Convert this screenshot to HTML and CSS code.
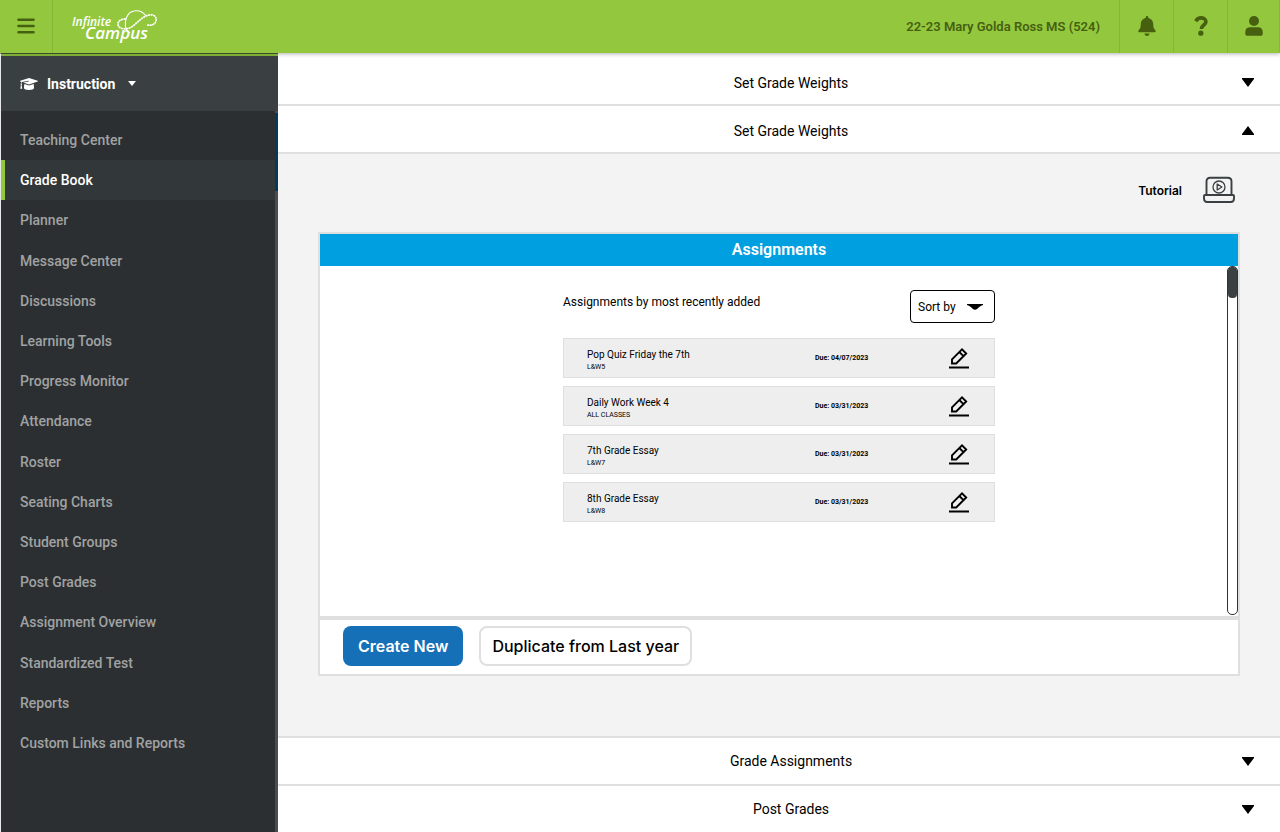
FILE: index.html
```html
<!DOCTYPE html>
<html lang="en">
<head>
    <meta charset="UTF-8">
    <meta name="viewport" content="width=device-width, initial-scale=1.0">
    <title>Infinite Campus - Grade Book</title>
    <link rel="stylesheet" href="styles.css">
</head>
<body>

<header class="topbar">
    <button class="topbar-button menu-button" aria-label="Menu">
        <svg width="18" height="16" viewBox="0 0 18 16" fill="none" stroke="currentColor" stroke-width="2.6" stroke-linecap="round"><path d="M1.5 1.8h15M1.5 8h15M1.5 14.2h15"/></svg>
    </button>
    <a href="#" class="logo" aria-label="Infinite Campus">
        <svg width="90" height="40" viewBox="0 0 90 40">
            <text class="logo-small" x="2" y="19">Infinite</text>
            <text class="logo-big" x="15" y="32">Campus</text>
            <g fill="none" stroke="#fff">
                <path d="M56 22C54 14 57 5 64 4c5-1 9 1 12 5" stroke-width="1.1"/>
                <path d="M56 22c1 2 2 3 4 4" stroke-width="1.1"/>
                <path d="M55 12c-4 0-7 2-7 5 0 5 8 7 15 2 5-4 10-10 16-11 5-1 8 2 7 6-1 3-4 5-9 4" stroke-width="1.8" stroke-linecap="round" stroke-dasharray="0.6 2"/>
            </g>
        </svg>
    </a>
    <span class="school">22-23 Mary Golda Ross MS (524)</span>
    <button class="topbar-button" aria-label="Notifications">
        <svg width="18" height="20" viewBox="0 0 448 512" fill="currentColor"><path d="M224 512c35.300 0 63.900-28.600 63.900-64H160.100c0 35.400 28.600 64 63.900 64zm215.400-149.700c-19.300-20.800-55.500-52-55.500-154.300 0-77.700-54.500-139.900-127.900-155.200V32c0-17.700-14.300-32-32-32s-32 14.300-32 32v20.800C118.600 68.100 64.100 130.300 64.100 208c0 102.300-36.200 133.500-55.500 154.300-6 6.400-8.700 14.200-8.600 21.700.1 16.400 13 32 32.100 32h383.800c19.100 0 32-15.600 32.100-32 .1-7.500-2.600-15.300-8.600-21.700z"/></svg>
    </button>
    <button class="topbar-button" aria-label="Help">
        <svg width="14" height="20" viewBox="0 0 14 20" fill="none" stroke="currentColor"><path d="M1.800 5.200C3.200 2.800 4.800 1.900 7 1.900c2.700 0 4.900 1.500 4.900 3.800 0 3.400-4.500 3.300-4.500 7.300" stroke-width="3.700"/><circle cx="6.800" cy="17.200" r="2.600" fill="currentColor" stroke="none"/></svg>
    </button>
    <button class="topbar-button account-button" aria-label="Account">
        <svg width="18" height="20" viewBox="0 0 18 20" fill="currentColor"><circle cx="9" cy="5" r="5"/><path d="M5 11.300h8c3 0 4.700 2 4.700 4.800v1.900c0 1-.8 1.800-1.800 1.800H2.100c-1 0-1.800-.8-1.800-1.800v-1.900c0-2.800 1.700-4.800 4.700-4.800z"/></svg>
    </button>
</header>

<div class="layout">
    <nav class="sidebar">
        <button class="sidebar-title">
            <svg width="18" height="12" viewBox="0 0 18 12" fill="#fff"><path d="M9 0l8.700 2.800c.4.200.4.700 0 .8L9 6.400 3.200 4.500 8.900 3.500 8.700 2.800 2 4c-.4.600-.5 1.100-.5 1.700.6.400.5 1 .1 1.300l.7 3.700H.3L.9 7c-.5-.4-.5-1 0-1.400 0-.6.2-1.200.4-1.700l-1-.3c-.4-.1-.4-.6 0-.8z"/><path d="M4.300 6L9 7.500 13.700 6l.4 4c0 1.100-2.300 2-5.100 2s-5.100-.9-5.100-2z"/></svg>
            <span>Instruction</span>
            <svg width="8" height="5" viewBox="0 0 8 5" fill="#fff"><path d="M0 0h8L4 5z"/></svg>
        </button>
        <ul class="nav-list">
            <li><a href="#">Teaching Center</a></li>
            <li><a href="#" class="active">Grade Book</a></li>
            <li><a href="#">Planner</a></li>
            <li><a href="#">Message Center</a></li>
            <li><a href="#">Discussions</a></li>
            <li><a href="#">Learning Tools</a></li>
            <li><a href="#">Progress Monitor</a></li>
            <li><a href="#">Attendance</a></li>
            <li><a href="#">Roster</a></li>
            <li><a href="#">Seating Charts</a></li>
            <li><a href="#">Student Groups</a></li>
            <li><a href="#">Post Grades</a></li>
            <li><a href="#">Assignment Overview</a></li>
            <li><a href="#">Standardized Test</a></li>
            <li><a href="#">Reports</a></li>
            <li><a href="#">Custom Links and Reports</a></li>
        </ul>
    </nav>

    <main class="content">
        <button class="accordion accordion-top">
            <span>Set Grade Weights</span>
            <svg width="12" height="9" viewBox="0 0 12 9"><path d="M0 0h12v1L6 9 0 1z"/></svg>
        </button>
        <button class="accordion accordion-top">
            <span>Set Grade Weights</span>
            <svg width="12" height="9" viewBox="0 0 12 9"><path d="M0 9h12V8L6 0 0 8z"/></svg>
        </button>

        <section class="panel">
            <a href="#" class="tutorial">
                <span>Tutorial</span>
                <svg width="32" height="28" viewBox="0 0 32 28" fill="none" stroke="#3a3f41" stroke-width="1.900">
                    <path d="M3.500 19V5.500c0-2.400 1.300-3.700 3.700-3.700h17.600c2.400 0 3.700 1.300 3.700 3.700V19"/>
                    <path d="M2 19h28c.700 0 1 .400 1 1v2.500c0 2-1.300 3.500-3.300 3.500H4.300C2.300 26 1 24.500 1 22.500V20c0-.600.300-1 1-1z"/>
                    <circle cx="16" cy="11" r="6" stroke-width="1.300"/>
                    <path d="M14.200 8v6l4.700-3z" stroke-width="1.300" stroke-linejoin="round"/>
                </svg>
            </a>

            <div class="card">
                <h2>Assignments</h2>
                <div class="card-body">
                    <div class="assignments">
                        <div class="list-head">
                            <span>Assignments by most recently added</span>
                            <div class="sort">
                                <select aria-label="Sort by">
                                    <option>Sort by</option>
                                </select>
                                <svg width="16" height="6" viewBox="0 0 16 6"><path d="M0 0h16v1c-3 1-4 2-6 4-1 1-3 1-4 0C4 3 3 2 0 1z"/></svg>
                            </div>
                        </div>
                        <ul class="assignment-list">
                            <li>
                                <div class="details"><p class="name">Pop Quiz Friday the 7th</p><p class="class-name">L&amp;W5</p></div>
                                <span class="due">Due: 04/07/2023</span>
                                <button class="edit" aria-label="Edit"><svg width="20" height="22" viewBox="0 0 20 22"><use href="#pencil"/></svg></button>
                            </li>
                            <li>
                                <div class="details"><p class="name">Daily Work Week 4</p><p class="class-name">ALL CLASSES</p></div>
                                <span class="due">Due: 03/31/2023</span>
                                <button class="edit" aria-label="Edit"><svg width="20" height="22" viewBox="0 0 20 22"><use href="#pencil"/></svg></button>
                            </li>
                            <li>
                                <div class="details"><p class="name">7th Grade Essay</p><p class="class-name">L&amp;W7</p></div>
                                <span class="due">Due: 03/31/2023</span>
                                <button class="edit" aria-label="Edit"><svg width="20" height="22" viewBox="0 0 20 22"><use href="#pencil"/></svg></button>
                            </li>
                            <li>
                                <div class="details"><p class="name">8th Grade Essay</p><p class="class-name">L&amp;W8</p></div>
                                <span class="due">Due: 03/31/2023</span>
                                <button class="edit" aria-label="Edit"><svg width="20" height="22" viewBox="0 0 20 22"><use href="#pencil"/></svg></button>
                            </li>
                        </ul>
                    </div>
                    <div class="scrollbar"><div class="scrollbar-thumb"></div></div>
                </div>
                <div class="card-footer">
                    <button class="btn btn-primary">Create New</button>
                    <button class="btn btn-outline">Duplicate from Last year</button>
                </div>
            </div>
        </section>

        <button class="accordion">
            <span>Grade Assignments</span>
            <svg width="12" height="9" viewBox="0 0 12 9"><path d="M0 0h12v1L6 9 0 1z"/></svg>
        </button>
        <button class="accordion">
            <span>Post Grades</span>
            <svg width="12" height="9" viewBox="0 0 12 9"><path d="M0 0h12v1L6 9 0 1z"/></svg>
        </button>
    </main>
</div>

<!-- shared icon -->
<svg class="icon-defs" width="0" height="0">
    <defs>
        <g id="pencil" fill="none" stroke="#000" stroke-width="1.900">
            <path d="M3 16.500v-4.200L13 2.300l4.200 4.200L7.200 16.500zM10.300 5l4.200 4.200"/>
            <path d="M0 20.500h20" stroke-width="2"/>
        </g>
    </defs>
</svg>

</body>
</html>
```
FILE: styles.css
```css
* {
    box-sizing: border-box;
}
body {
    font-family: Roboto, Arial, sans-serif;
    font-size: 14px;
    margin: 0;
    background-color: white;
    color: black;
}
button, select {
    font-family: inherit;
}
button {
    border: none;
    background: none;
    padding: 0;
    cursor: pointer;
}
a {
    text-decoration: none;
}
ul {
    list-style: none;
    margin: 0;
    padding: 0;
}

/* Top bar */
.topbar {
    display: flex;
    align-items: center;
    height: 53px;
    background-color: #93c83e;
    color: #466010;
    position: relative;
    box-shadow: 0 1px 4px rgba(0, 0, 0, 0.3);
}
.topbar-button {
    display: flex;
    align-items: center;
    justify-content: center;
    width: 54px;
    height: 53px;
    padding-bottom: 2px;
    color: #466010;
    border-left: 1px solid #84b637;
}
.menu-button {
    width: 53px;
    border-left: none;
    border-right: 1px solid #84b637;
}
.account-button {
    width: 53px;
    border-right: 1px solid #84b637;
}
.logo {
    display: flex;
    margin-left: 17px;
}
.logo text {
    font-family: "Open Sans", sans-serif;
    font-style: italic;
    font-weight: 600;
    fill: white;
}
.logo .logo-small {
    font-size: 12px;
}
.logo .logo-big {
    font-size: 17px;
}
.school {
    margin-left: auto;
    margin-right: 19px;
    font-size: 13px;
    font-weight: 600;
}

.layout {
    display: flex;
    min-height: calc(100vh - 53px);
}

/* Sidebar */
.sidebar {
    position: relative;
    flex: 0 0 278px;
    min-width: 0;
    border-top: 1px solid #3c4a30;
    border-left: 1px solid #e8e8e8;
    border-right: 3px solid #4b4c4d;
    background-color: #2b2f31;
}
.sidebar::after {
    content: "";
    position: absolute;
    top: 59px;
    right: -3px;
    width: 3px;
    height: 78px;
    background-color: #003b57;
}
.sidebar-title {
    display: flex;
    align-items: center;
    width: 277px;
    height: 57px;
    padding: 0 0 0 19px;
    gap: 9px;
    border-top: 2px solid #7fae35;
    background-color: #3a3f41;
    color: white;
    font-size: 14px;
    font-weight: 700;
}
.sidebar-title span {
    margin-right: 4px;
}
.nav-list {
    display: grid;
    grid-template-rows: repeat(16, 1fr);
    height: 643px;
    margin-top: 9px;
}
.nav-list a {
    display: flex;
    align-items: center;
    height: 100%;
    padding-left: 15px;
    border-left: 4px solid transparent;
    color: #a0a2a3;
    font-weight: 500;
}
.nav-list a.active {
    border-left-color: #93c83e;
    background-color: #323739;
    color: white;
}

/* Main column */
.content {
    flex: 1;
    min-width: 0;
    padding-top: 5px;
}
.accordion {
    display: flex;
    align-items: center;
    width: 100%;
    height: 48px;
    padding: 0 26px 0 62px;
    border-bottom: 2px solid #dfdfdf;
    background-color: white;
    color: black;
    font-size: 14px;
}
.accordion-top {
    padding-top: 3px;
}
.accordion:last-child {
    height: 46px;
    border-bottom: none;
}
.accordion span {
    flex: 1;
    text-align: center;
}
.panel {
    padding: 22px 40px 60px;
    border-bottom: 2px solid #dfdfdf;
    background-color: #f3f3f3;
}
.tutorial {
    display: flex;
    align-items: center;
    justify-content: flex-end;
    gap: 21px;
    margin-right: 5px;
    color: black;
    font-family: Inter, sans-serif;
    font-size: 12px;
    font-weight: 600;
}

/* Assignments card */
.card {
    margin-top: 28px;
    border: 2px solid #dfdfdf;
    background-color: white;
}
.card h2 {
    margin: 0;
    background-color: #009fe0;
    color: white;
    font-size: 16px;
    font-weight: 600;
    line-height: 32px;
    text-align: center;
}
.card-body {
    position: relative;
    min-height: 350px;
    padding: 24px 0;
}
.assignments {
    width: 432px;
    margin: 0 auto;
}
.list-head {
    display: flex;
    justify-content: space-between;
    align-items: flex-start;
    font-size: 12px;
    line-height: 24px;
}
.sort {
    position: relative;
}
.sort select {
    display: block;
    appearance: none;
    width: 85px;
    height: 33px;
    padding: 0 7px;
    border: 1px solid black;
    border-radius: 4px;
    background-color: white;
    color: black;
    font-size: 12px;
}
.sort svg {
    position: absolute;
    right: 12px;
    top: 14px;
    pointer-events: none;
}
.assignment-list {
    display: grid;
    gap: 8px;
    margin-top: 15px;
}
.assignment-list li {
    display: grid;
    grid-template-columns: 228px 1fr auto;
    align-items: center;
    height: 40px;
    padding: 0 25px 0 23px;
    border: 1px solid #dfdfdf;
    background-color: #eeeeee;
}
.assignment-list p {
    margin: 0;
}
.details {
    padding-top: 5px;
}
.name {
    font-size: 10px;
    line-height: 12px;
}
.class-name {
    font-size: 7px;
    line-height: 12px;
}
.due {
    font-size: 7px;
    font-weight: 700;
}
.edit {
    display: flex;
}
.scrollbar {
    position: absolute;
    top: 0;
    bottom: 1px;
    right: 0;
    width: 11px;
    border: 1px solid #333333;
    border-radius: 5px;
}
.scrollbar-thumb {
    height: 31px;
    border-radius: 4px;
    background-color: #3a3f41;
}
.card-footer {
    display: flex;
    align-items: center;
    gap: 16px;
    padding: 6px 23px 8px;
    border-top: 4px solid #dfdfdf;
}
.btn {
    height: 40px;
    padding: 0 15px;
    border-radius: 8px;
    font-family: Inter, sans-serif;
    font-size: 16px;
}
.btn-primary {
    background-color: #1570b8;
    color: white;
    font-weight: 600;
}
.btn-outline {
    padding: 0 11px;
    border: 2px solid #dfdfdf;
    background-color: white;
    color: black;
    font-weight: 500;
}
.icon-defs {
    position: absolute;
}
```
